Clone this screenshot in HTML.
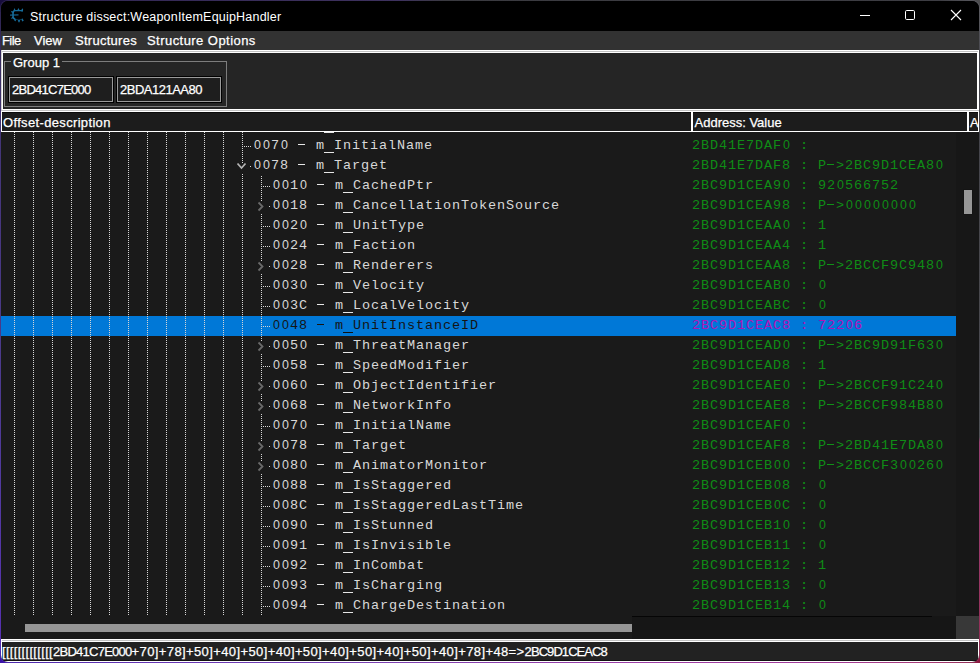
<!DOCTYPE html>
<html lang="en">
<head>
<meta charset="utf-8">
<title>Structure dissect:WeaponItemEquipHandler</title>
<style>
  html, body { margin: 0; padding: 0; }
  body {
    width: 980px; height: 663px; overflow: hidden; position: relative;
    background: #000;
    font-family: "Liberation Sans", sans-serif;
    color: #fff;
  }
  /* desktop wallpaper peeking out behind the window border / rounded corners */
  .desk { position: absolute; }
  #desk-t { left: 0; top: 0; width: 980px; height: 12px;
    background: linear-gradient(90deg, #170c3c 0, #1c1040 12px, #2d1f4e 400px, #28282b 445px, #2c2c2e 940px, #48484a 972px, #4c4c4e 980px); }
  #desk-b { left: 0; top: 651px; width: 980px; height: 12px;
    background: linear-gradient(90deg, #3c14a8 0, #5a22b0 150px, #7030b0 350px, #9a2ca0 640px, #a02890 830px, #a82868 930px, #8a1a40 980px); }
  #desk-l { left: 0; top: 12px; width: 12px; height: 639px;
    background: linear-gradient(180deg, #1c1040 0, #33226a 120px, #3c2880 330px, #44289a 480px, #4a1cb0 639px); }
  #desk-r { left: 968px; top: 12px; width: 12px; height: 639px;
    background: linear-gradient(180deg, #4a4a4c 0, #333336 60px, #38383a 300px, #444446 425px, #9a3068 430px, #98285c 540px, #8a1a40 639px); }
  #win {
    position: absolute; left: 0; top: 0; width: 978px; height: 661px;
    border: 1px solid rgba(170,170,200,0.14); border-radius: 8px;
    background: #000; background-clip: padding-box; overflow: hidden;
  }
  .abs { position: absolute; }
  .mi, #grouplbl, .edit, .hcell, #status { -webkit-text-stroke: 0.25px #fff; }
  #titlebar { left: 0; top: 0; width: 978px; height: 30px; background: #000; }
  #title { left: 29px; top: 8px; font-size: 12.5px; letter-spacing: 0.21px; line-height: 16px; white-space: nowrap; color: #fff; }
  #menubar { left: 0; top: 30px; width: 978px; height: 20px; background: #323232; }
  .mi { position: absolute; top: 2px; font-size: 13px; line-height: 16px; white-space: nowrap; color: #fff; }
  #tp-outer { left: 0; top: 49px; width: 978px; height: 61px; background: #fff; }
  #tp-g1 { left: 1px; top: 50px; width: 976px; height: 1px; background: #c2c2c2; }
  #tp-g2 { left: 0; top: 109px; width: 978px; height: 1px; background: #c2c2c2; }
  #tp-l { left: 0; top: 49px; width: 1px; height: 60px; background: #d0d0d0; }
  #toppanel { left: 2px; top: 52px; width: 974px; height: 56px; background: #252525; }
  #group { left: 3px; top: 60px; width: 221px; height: 44px; border: 1px solid #7d7d7d; }
  #grouplbl { left: 10px; top: 54px; padding: 0 2px; background: #252525; font-size: 13px; line-height: 16px; }
  .edit { position: absolute; top: 76px; height: 23px; background: #1e1e1e;
    border: 1px solid #9a9a9a; box-shadow: 0 0 0 1px #000; font-size: 13px; letter-spacing: -0.74px; line-height: 23px; white-space: nowrap; }
  .edit span { position: absolute; left: 2px; top: 0; }
  .hcell { position: absolute; top: 110px; height: 21px; box-sizing: border-box; background: #1c1c1c; border: 1px solid #fff; box-shadow: inset 0 1px 0 #0c0c0c;
    font-size: 13px; line-height: 19px; white-space: nowrap; overflow: hidden; }
  .hcell span { position: absolute; left: 1px; top: 1px; }
  #tree { left: 0; top: 131px; width: 955px; height: 484px; background: #1a1a1a; overflow: hidden; }
  #vtrack { left: 955px; top: 131px; width: 23px; height: 484px; background: #171717; }
  #vthumb { left: 963px; top: 189px; width: 8px; height: 24px; background: #979797; box-shadow: 0 0 0 1px #141414; }
  #htrack { left: 0; top: 615px; width: 955px; height: 23px; background: #1a1a1a; }
  #htrack2 { left: 631px; top: 615px; width: 324px; height: 23px; background: #161616; }
  #hline { left: 631px; top: 615px; width: 300px; height: 1px; background: #050505; }
  #hthumb { left: 24px; top: 623px; width: 607px; height: 8px; background: #969696; }
  #grip { left: 955px; top: 615px; width: 23px; height: 23px; background: #383838; }
  #statusline { left: 0; top: 638px; width: 978px; height: 3px; background: #fff; }
  #statusline2 { left: 1px; top: 639px; width: 976px; height: 1px; background: #c2c2c2; }
  #status { left: 0; top: 641px; width: 976px; height: 19px; background: #222; border: 1px solid #fff; border-top: none;
    box-shadow: inset 0 -1px 0 #121212;
    font-size: 13px; letter-spacing: 0.087px; line-height: 19px; white-space: nowrap; }
  #status span { position: absolute; left: 0; top: 0; letter-spacing: 0.388px; }
  #status span b { font-weight: normal; letter-spacing: 0.31px; }
  #status span i { font-style: normal; letter-spacing: -0.739px; }
  #status span u { text-decoration: none; letter-spacing: -0.927px; }
  .row { position: absolute; left: 0; width: 955px; height: 20px;
    font-family: "Liberation Mono", monospace; font-size: 13.5px; letter-spacing: 0.9px; line-height: 20px; white-space: pre; color: #d8d8d8; }
  .row .l { position: absolute; top: 0; }
  .row .r { position: absolute; top: 0; left: 692px; color: #0f8c16; }
  /* hyphen / underscore glyphs: keep the characters, but paint Courier-style long strokes */
  .row i { font-style: normal; position: relative; display: inline-block; width: 9px; height: 20px; vertical-align: top; letter-spacing: 0; color: transparent; }
  .row i::after { content: ""; position: absolute; height: 1px; background: #e6e6e6; }
  .row i.h::after { left: -0.5px; top: 8px; width: 7px; }
  .row i.u::after { left: -1.5px; top: 16px; width: 10.5px; }
  .row.sel i::after { background: #101010; }
  .row .r i::after { background: #119018; }
  .row.sel .r i::after { background: #b210b8; }
  .row b { font: normal 13.5px/12px "Liberation Sans", sans-serif; display: inline-block; width: 9px; text-align: center; letter-spacing: 0; transform: scaleX(0.92); }
  .row.sel .l { color: #151515; }
  .row.sel .r { color: #b210b8; }
  #selbg { left: 0; top: 315px; width: 955px; height: 20px; background: #0078d7; }
  svg { position: absolute; left: 0; top: 0; }
</style>
</head>
<body>
<div id="desk-t" class="desk"></div><div id="desk-b" class="desk"></div><div id="desk-l" class="desk"></div><div id="desk-r" class="desk"></div>
<div id="win">
  <div id="titlebar" class="abs"></div>
  <svg width="30" height="30" viewBox="1 1 30 30" style="left:0;top:0">
    <!-- Cheat Engine style gear "C" icon (coords in page space) -->
    <g fill="none" stroke="#176d9b" stroke-linecap="butt" stroke-linejoin="round">
      <path d="M22.8 10.6 L14.6 10.6" stroke-width="1.2"/>
      <path d="M14.8 10.4 Q13.0 10.9 13.05 13 L13.05 16.6 Q13.3 18.6 15.2 19.3" stroke-width="1.6"/>
      <path d="M15 19.3 Q18.8 20.6 22.6 19.2" stroke-width="0.9" opacity="0.55"/>
      <path d="M10 15.15 L18.5 14.9" stroke-width="1.1" opacity="0.9"/>
    </g>
    <g fill="#176d9b">
      <polygon points="13.6,10.9 14.2,7.9 15.9,10.7"/>
      <polygon points="17.2,10.5 18.4,7.9 19.8,10.5"/>
      <polygon points="20.9,10.6 22.4,8.6 23.1,8.8 23,11.6 21.4,11.6"/>
      <polygon points="10.8,11.0 13.2,11.6 12.4,13.4"/>
      <polygon points="10.8,18.8 12.6,16.6 13.8,18.2"/>
      <polygon points="14.2,19.0 16.2,19.4 15.6,21.2 14.6,21.0"/>
      <polygon points="18.0,20.0 20.0,20.0 19.6,22.2 18.4,22.2"/>
      <polygon points="21.6,18.9 22.6,18.6 23.8,20.8 22.0,21.4"/>
    </g>
  </svg>
  <div id="title" class="abs">Structure dissect:WeaponItemEquipHandler</div>
  <svg width="120" height="30" viewBox="0 0 120 30" style="left:858px;top:0" fill="none" stroke="#fff" stroke-width="1">
    <line x1="1" y1="14.5" x2="11" y2="14.5"/>
    <rect x="46.5" y="9.5" width="9" height="9" rx="1.2"/>
    <path d="M92 9 L102 19 M102 9 L92 19" stroke-width="1.1"/>
  </svg>

  <div id="menubar" class="abs">
    <span class="mi" style="left:1px;letter-spacing:-0.6px">File</span>
    <span class="mi" style="left:33px">View</span>
    <span class="mi" style="left:74px;letter-spacing:0.275px">Structures</span>
    <span class="mi" style="left:146px;letter-spacing:0.45px">Structure Options</span>
  </div>

  <div id="tp-outer" class="abs"></div><div id="tp-g1" class="abs"></div><div id="tp-g2" class="abs"></div><div id="tp-l" class="abs"></div>
  <div id="toppanel" class="abs"></div>
  <div id="group" class="abs"></div>
  <div id="grouplbl" class="abs">Group 1</div>
  <div class="edit" style="left:8px;width:102px"><span>2BD41C7E000</span></div>
  <div class="edit" style="left:116px;width:102px"><span style="letter-spacing:-0.5px">2BDA121AA80</span></div>

  <div id="tree" class="abs"></div>
  <div id="vtrack" class="abs"></div>
  <div id="vthumb" class="abs"></div>
  <div id="selbg" class="abs"></div>

  <!-- tree guide lines; coordinates are in page space, shifted by the 1px window border -->
  <svg width="978" height="660" viewBox="1 1 978 660" shape-rendering="crispEdges" fill="none" stroke="#d6d6d6" stroke-width="1" stroke-dasharray="1 1">
<line x1="14.5" y1="132" x2="14.5" y2="616"/>
<line x1="33.5" y1="132" x2="33.5" y2="616"/>
<line x1="52.5" y1="132" x2="52.5" y2="616"/>
<line x1="71.5" y1="132" x2="71.5" y2="616"/>
<line x1="90.5" y1="132" x2="90.5" y2="616"/>
<line x1="109.5" y1="132" x2="109.5" y2="616"/>
<line x1="128.5" y1="132" x2="128.5" y2="616"/>
<line x1="147.5" y1="132" x2="147.5" y2="616"/>
<line x1="166.5" y1="132" x2="166.5" y2="616"/>
<line x1="185.5" y1="132" x2="185.5" y2="616"/>
<line x1="204.5" y1="132" x2="204.5" y2="616"/>
<line x1="223.5" y1="132" x2="223.5" y2="616"/>
<line x1="242.5" y1="132" x2="242.5" y2="163"/>
<line x1="242.5" y1="174" x2="242.5" y2="616"/>
<line x1="261.5" y1="176" x2="261.5" y2="202"/>
<line x1="261.5" y1="214" x2="261.5" y2="262"/>
<line x1="261.5" y1="274" x2="261.5" y2="342"/>
<line x1="261.5" y1="354" x2="261.5" y2="382"/>
<line x1="261.5" y1="394" x2="261.5" y2="402"/>
<line x1="261.5" y1="414" x2="261.5" y2="442"/>
<line x1="261.5" y1="454" x2="261.5" y2="462"/>
<line x1="261.5" y1="474" x2="261.5" y2="616"/>
<line x1="244" y1="146.5" x2="251" y2="146.5"/>
<rect x="250" y="166" width="1" height="1" fill="#d6d6d6" stroke="none"/>
<line x1="263" y1="186.5" x2="270" y2="186.5"/>
<rect x="269" y="206" width="1" height="1" fill="#d6d6d6" stroke="none"/>
<line x1="263" y1="226.5" x2="270" y2="226.5"/>
<line x1="263" y1="246.5" x2="270" y2="246.5"/>
<rect x="269" y="266" width="1" height="1" fill="#d6d6d6" stroke="none"/>
<line x1="263" y1="286.5" x2="270" y2="286.5"/>
<line x1="263" y1="306.5" x2="270" y2="306.5"/>
<line x1="263" y1="326.5" x2="270" y2="326.5"/>
<rect x="269" y="346" width="1" height="1" fill="#d6d6d6" stroke="none"/>
<line x1="263" y1="366.5" x2="270" y2="366.5"/>
<rect x="269" y="386" width="1" height="1" fill="#d6d6d6" stroke="none"/>
<rect x="269" y="406" width="1" height="1" fill="#d6d6d6" stroke="none"/>
<line x1="263" y1="426.5" x2="270" y2="426.5"/>
<rect x="269" y="446" width="1" height="1" fill="#d6d6d6" stroke="none"/>
<rect x="269" y="466" width="1" height="1" fill="#d6d6d6" stroke="none"/>
<line x1="263" y1="486.5" x2="270" y2="486.5"/>
<line x1="263" y1="506.5" x2="270" y2="506.5"/>
<line x1="263" y1="526.5" x2="270" y2="526.5"/>
<line x1="263" y1="546.5" x2="270" y2="546.5"/>
<line x1="263" y1="566.5" x2="270" y2="566.5"/>
<line x1="263" y1="586.5" x2="270" y2="586.5"/>
<line x1="263" y1="606.5" x2="270" y2="606.5"/>
  </svg>
  <svg width="978" height="660" viewBox="1 1 978 660" fill="none" stroke-width="1.8" stroke-linecap="butt" stroke-linejoin="miter">
<polyline points="237.5,163.5 241.5,168 245.5,163.5" stroke="#b4b4b4"/>
<polyline points="258.5,202.5 262.5,206.5 258.5,210.5" stroke="#6a6a6a"/>
<polyline points="258.5,262.5 262.5,266.5 258.5,270.5" stroke="#6a6a6a"/>
<polyline points="258.5,342.5 262.5,346.5 258.5,350.5" stroke="#6a6a6a"/>
<polyline points="258.5,382.5 262.5,386.5 258.5,390.5" stroke="#6a6a6a"/>
<polyline points="258.5,402.5 262.5,406.5 258.5,410.5" stroke="#6a6a6a"/>
<polyline points="258.5,442.5 262.5,446.5 258.5,450.5" stroke="#6a6a6a"/>
<polyline points="258.5,462.5 262.5,466.5 258.5,470.5" stroke="#6a6a6a"/>
  </svg>

  <div class="abs" style="left:-1px;top:-1px;width:980px;height:617px;overflow:hidden">
    <!-- partially hidden row above the first visible one -->
    <div class="row" style="top:116px"><span class="l" style="left:253px"><b>0</b><b>0</b>68 <i class="h">-</i> m<i class="u">_</i>NetworkInfo</span></div>
<div class="row" style="top:136px"><span class="l" style="left:253px"><b>0</b><b>0</b>7<b>0</b> <i class="h">-</i> m<i class="u">_</i>InitialName</span><span class="r">2BD41E7DAF<b>0</b> : </span></div>
<div class="row" style="top:156px"><span class="l" style="left:253px"><b>0</b><b>0</b>78 <i class="h">-</i> m<i class="u">_</i>Target</span><span class="r">2BD41E7DAF8 : P<i class="h">-</i>&gt;2BC9D1CEA8<b>0</b></span></div>
<div class="row" style="top:176px"><span class="l" style="left:272px"><b>0</b><b>0</b>1<b>0</b> <i class="h">-</i> m<i class="u">_</i>CachedPtr</span><span class="r">2BC9D1CEA9<b>0</b> : 92<b>0</b>566752</span></div>
<div class="row" style="top:196px"><span class="l" style="left:272px"><b>0</b><b>0</b>18 <i class="h">-</i> m<i class="u">_</i>CancellationTokenSource</span><span class="r">2BC9D1CEA98 : P<i class="h">-</i>&gt;<b>0</b><b>0</b><b>0</b><b>0</b><b>0</b><b>0</b><b>0</b><b>0</b></span></div>
<div class="row" style="top:216px"><span class="l" style="left:272px"><b>0</b><b>0</b>2<b>0</b> <i class="h">-</i> m<i class="u">_</i>UnitType</span><span class="r">2BC9D1CEAA<b>0</b> : 1</span></div>
<div class="row" style="top:236px"><span class="l" style="left:272px"><b>0</b><b>0</b>24 <i class="h">-</i> m<i class="u">_</i>Faction</span><span class="r">2BC9D1CEAA4 : 1</span></div>
<div class="row" style="top:256px"><span class="l" style="left:272px"><b>0</b><b>0</b>28 <i class="h">-</i> m<i class="u">_</i>Renderers</span><span class="r">2BC9D1CEAA8 : P<i class="h">-</i>&gt;2BCCF9C948<b>0</b></span></div>
<div class="row" style="top:276px"><span class="l" style="left:272px"><b>0</b><b>0</b>3<b>0</b> <i class="h">-</i> m<i class="u">_</i>Velocity</span><span class="r">2BC9D1CEAB<b>0</b> : <b>0</b></span></div>
<div class="row" style="top:296px"><span class="l" style="left:272px"><b>0</b><b>0</b>3C <i class="h">-</i> m<i class="u">_</i>LocalVelocity</span><span class="r">2BC9D1CEABC : <b>0</b></span></div>
<div class="row sel" style="top:316px"><span class="l" style="left:272px"><b>0</b><b>0</b>48 <i class="h">-</i> m<i class="u">_</i>UnitInstanceID</span><span class="r">2BC9D1CEAC8 : 722<b>0</b>6</span></div>
<div class="row" style="top:336px"><span class="l" style="left:272px"><b>0</b><b>0</b>5<b>0</b> <i class="h">-</i> m<i class="u">_</i>ThreatManager</span><span class="r">2BC9D1CEAD<b>0</b> : P<i class="h">-</i>&gt;2BC9D91F63<b>0</b></span></div>
<div class="row" style="top:356px"><span class="l" style="left:272px"><b>0</b><b>0</b>58 <i class="h">-</i> m<i class="u">_</i>SpeedModifier</span><span class="r">2BC9D1CEAD8 : 1</span></div>
<div class="row" style="top:376px"><span class="l" style="left:272px"><b>0</b><b>0</b>6<b>0</b> <i class="h">-</i> m<i class="u">_</i>ObjectIdentifier</span><span class="r">2BC9D1CEAE<b>0</b> : P<i class="h">-</i>&gt;2BCCF91C24<b>0</b></span></div>
<div class="row" style="top:396px"><span class="l" style="left:272px"><b>0</b><b>0</b>68 <i class="h">-</i> m<i class="u">_</i>NetworkInfo</span><span class="r">2BC9D1CEAE8 : P<i class="h">-</i>&gt;2BCCF984B8<b>0</b></span></div>
<div class="row" style="top:416px"><span class="l" style="left:272px"><b>0</b><b>0</b>7<b>0</b> <i class="h">-</i> m<i class="u">_</i>InitialName</span><span class="r">2BC9D1CEAF<b>0</b> : </span></div>
<div class="row" style="top:436px"><span class="l" style="left:272px"><b>0</b><b>0</b>78 <i class="h">-</i> m<i class="u">_</i>Target</span><span class="r">2BC9D1CEAF8 : P<i class="h">-</i>&gt;2BD41E7DA8<b>0</b></span></div>
<div class="row" style="top:456px"><span class="l" style="left:272px"><b>0</b><b>0</b>8<b>0</b> <i class="h">-</i> m<i class="u">_</i>AnimatorMonitor</span><span class="r">2BC9D1CEB<b>0</b><b>0</b> : P<i class="h">-</i>&gt;2BCCF3<b>0</b><b>0</b>26<b>0</b></span></div>
<div class="row" style="top:476px"><span class="l" style="left:272px"><b>0</b><b>0</b>88 <i class="h">-</i> m<i class="u">_</i>IsStaggered</span><span class="r">2BC9D1CEB<b>0</b>8 : <b>0</b></span></div>
<div class="row" style="top:496px"><span class="l" style="left:272px"><b>0</b><b>0</b>8C <i class="h">-</i> m<i class="u">_</i>IsStaggeredLastTime</span><span class="r">2BC9D1CEB<b>0</b>C : <b>0</b></span></div>
<div class="row" style="top:516px"><span class="l" style="left:272px"><b>0</b><b>0</b>9<b>0</b> <i class="h">-</i> m<i class="u">_</i>IsStunned</span><span class="r">2BC9D1CEB1<b>0</b> : <b>0</b></span></div>
<div class="row" style="top:536px"><span class="l" style="left:272px"><b>0</b><b>0</b>91 <i class="h">-</i> m<i class="u">_</i>IsInvisible</span><span class="r">2BC9D1CEB11 : <b>0</b></span></div>
<div class="row" style="top:556px"><span class="l" style="left:272px"><b>0</b><b>0</b>92 <i class="h">-</i> m<i class="u">_</i>InCombat</span><span class="r">2BC9D1CEB12 : 1</span></div>
<div class="row" style="top:576px"><span class="l" style="left:272px"><b>0</b><b>0</b>93 <i class="h">-</i> m<i class="u">_</i>IsCharging</span><span class="r">2BC9D1CEB13 : <b>0</b></span></div>
<div class="row" style="top:596px"><span class="l" style="left:272px"><b>0</b><b>0</b>94 <i class="h">-</i> m<i class="u">_</i>ChargeDestination</span><span class="r">2BC9D1CEB14 : <b>0</b></span></div>
  </div>

  <div class="hcell" style="left:0;width:691px"><span style="letter-spacing:0.34px">Offset-description</span></div>
  <div class="hcell" style="left:691px;width:276px"><span style="left:1.5px">Address: Value</span></div>
  <div class="hcell" style="left:967px;width:11px"><span style="left:1px">Address: Value</span></div>

  <div id="htrack" class="abs"></div>
  <div id="htrack2" class="abs"></div><div id="hline" class="abs"></div>
  <div id="hthumb" class="abs"></div>
  <div id="grip" class="abs"></div>
  <div id="statusline" class="abs"></div><div id="statusline2" class="abs"></div>
  <div id="status" class="abs"><span><b>[[[[[[[[[[[[[</b><i>2BD41C7E000</i>+70]+78]+50]+40]+50]+40]+50]+40]+50]+40]+50]+40]+78]+48=&gt;<u>2BC9D1CEAC8</u></span></div>
</div>
</body>
</html>
